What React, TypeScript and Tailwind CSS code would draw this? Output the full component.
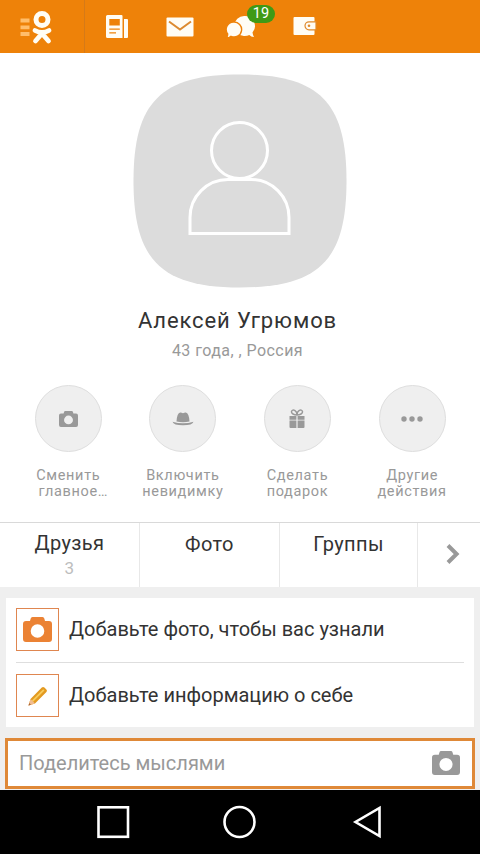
import { useState } from 'react';
import type { ReactNode } from 'react';

const actions = [
  { lines: ['Сменить', 'главное…'], icon: <CameraIcon className="h-[16px] w-[19px] text-[#999]" />, shift: true },
  { lines: ['Включить', 'невидимку'], icon: <HatIcon /> },
  { lines: ['Сделать', 'подарок'], icon: <GiftIcon /> },
  { lines: ['Другие', 'действия'], icon: <DotsIcon /> },
];

export default function App() {
  return (
    <div className="flex h-[854px] w-[480px] flex-col overflow-hidden bg-[#efefef] font-[Roboto,sans-serif]">
      <TopBar />
      <Profile />
      <Tabs />
      <Suggestions />
      <ShareBox />
      <NavBar />
    </div>
  );
}

function TopBar() {
  return (
    <header className="flex h-[53px] shrink-0 bg-[#ee8209]">
      <div className="flex w-[85px] border-r border-[#d57a18]">
        <Logo />
      </div>
      <div className="flex items-center pl-[21px]">
        <NewsIcon />
        <MailIcon />
        <div className="relative ml-[31px]">
          <ChatIcon />
          <span className="absolute -top-[10px] left-[22px] h-[18px] w-[28px] rounded-full bg-[#3f9a16] text-center text-[14.5px] leading-[18px] text-white">19</span>
        </div>
        <WalletIcon />
      </div>
    </header>
  );
}

function Profile() {
  return (
    <section className="flex h-[469px] shrink-0 flex-col items-center bg-white pt-[21px]">
      <Avatar />
      <h1 className="mt-[19px] pr-[5px] text-[22px] leading-[28px] tracking-[0.9px] text-[#333]">Алексей Угрюмов</h1>
      <p className="mt-[7px] pr-[5px] text-[16px] leading-[18px] tracking-[0.45px] text-[#999]">43 года, , Россия</p>
      <div className="mt-[25px] flex w-full pl-[11px]">
        {actions.map((a) => (
          <div key={a.lines[0]} className="flex w-[114.6px] shrink-0 flex-col items-center">
            <div className="flex h-[67px] w-[67px] items-center justify-center rounded-full border border-[#dedede] bg-[#efefef]">
              {a.icon}
            </div>
            <div className="mt-[16px] text-center text-[14.5px] leading-[16px] tracking-[0.65px] whitespace-nowrap text-[#999]">
              <div>{a.lines[0]}</div>
              <div className={a.shift ? 'pl-[10px]' : ''}>{a.lines[1]}</div>
            </div>
          </div>
        ))}
      </div>
    </section>
  );
}

function Tabs() {
  return (
    <nav className="flex h-[65px] shrink-0 border-t border-[#d9d9d9] bg-white text-center text-[20px] leading-[24px] tracking-[0.4px] text-[#333]">
      <div className="w-[140px] border-r border-[#e8e8e8] pt-[8px]">
        <div>Друзья</div>
        <div className="mt-px text-[17px] text-[#bdbdbd]">3</div>
      </div>
      <div className="w-[140px] border-r border-[#e8e8e8] pt-[9px]">Фото</div>
      <div className="w-[138px] border-r border-[#e8e8e8] pt-[9px]">Группы</div>
      <div className="flex flex-1 items-center justify-center pb-[2px] pl-[8px]">
        <svg width="14" height="22" viewBox="0 0 14 22" fill="none" stroke="#999" strokeWidth="4">
          <path d="M2 2.500 10.600 11 2 19.500" />
        </svg>
      </div>
    </nav>
  );
}

function Suggestions() {
  return (
    <section className="mx-[6px] mt-[11px] h-[129px] shrink-0 bg-white px-[10px] pt-[10px]">
      <SuggestionRow text="Добавьте фото, чтобы вас узнали">
        <CameraIcon className="h-[25px] w-[29px] text-[#eb8234]" />
      </SuggestionRow>
      <div className="mt-[11px] mb-[11px] h-px bg-[#dedede]" />
      <SuggestionRow text="Добавьте информацию о себе">
        <PencilIcon />
      </SuggestionRow>
    </section>
  );
}

function SuggestionRow({ text, children }: { text: string; children: ReactNode }) {
  return (
    <div className="flex h-[43px] items-center">
      <div className="flex h-[43px] w-[43px] items-center justify-center border border-[#df8650]">{children}</div>
      <span className="ml-[10px] pb-px text-[20px] leading-[24px] whitespace-nowrap text-[#333]">{text}</span>
    </div>
  );
}

function ShareBox() {
  const [text, setText] = useState<string>('');
  return (
    <div className="mx-[5px] mt-[11px] flex h-[51px] shrink-0 items-center border-[3px] border-[#df8938] bg-white pr-[12px] pb-px pl-[11px]">
      <input
        value={text}
        onChange={(e) => setText(e.target.value)}
        placeholder="Поделитесь мыслями"
        className="min-w-0 flex-1 text-[20px] outline-none placeholder:text-[#999]"
      />
      <CameraIcon className="h-[24px] w-[28px] text-[#999]" />
    </div>
  );
}

function NavBar() {
  return (
    <footer className="mt-px flex flex-1 items-center justify-center bg-black">
      <svg width="286" height="36" viewBox="0 0 286 36" fill="none" stroke="#fff" strokeWidth="2.600">
        <rect x="1.500" y="3.300" width="29.500" height="29.500" />
        <circle cx="142.500" cy="18" r="15" />
        <path d="M282.500 4v28L258.500 18z" />
      </svg>
    </footer>
  );
}

/* ------------ icons ------------ */

function Logo() {
  return (
    <svg width="84" height="53" viewBox="0 0 84 53" fill="none" stroke="#fffdf5" strokeLinecap="round">
      <g stroke="#ffbd6b" strokeWidth="3.800" strokeLinecap="butt">
        <path d="M20.500 20.500h9M20.500 27.300h9M20.500 34h9" />
      </g>
      <circle cx="42" cy="19.500" r="6" strokeWidth="5" />
      <path d="M35 30.500Q42 34.500 49 30.500M42 33.500 35.500 41M42 33.500 48.500 41" strokeWidth="4.800" />
    </svg>
  );
}

function NewsIcon() {
  return (
    <svg width="23" height="24" viewBox="0 0 23 24" fill="#fffdf5">
      <path fillRule="evenodd" d="M1.500 0h14q1 0 1 1v22h-15q-1.500 0-1.500-1.500v-20q0-1.500 1.500-1.500zM3.300 4v6.500h10.500v-6.500zM3.300 13.500v1.200h10.500v-1.200zM3.300 17.200v1.200h6.700v-1.200z" />
      <path d="M18 4h3q1 0 1 1v17q0 1-1 1h-3z" />
    </svg>
  );
}

function MailIcon() {
  return (
    <svg className="ml-[37px]" width="28" height="20" viewBox="0 0 28 20">
      <rect x="0.500" y="0.500" width="27" height="19" rx="1" fill="#fffdf5" />
      <path d="M3 4.500 14 12.500 25 4.500" fill="none" stroke="#dc8a30" strokeWidth="2" />
    </svg>
  );
}

function ChatIcon() {
  return (
    <svg width="31" height="24" viewBox="0 0 31 24" fill="#fffdf5">
      <path d="M19.500 1a10 10 0 0 1 8 16.500q.3 2.500 1.500 4.500-3-.2-4.700-2-2.400 1.200-5.500 1A10 10 0 0 1 19.500 1z" />
      <path d="M8.500 7a7.500 7.500 0 1 1-2.500 14.300q-2 1.700-4.500 1.700 1.200-1.700 1.200-4A7.500 7.500 0 0 1 8.500 7z" stroke="#ee8209" strokeWidth="1.400" />
    </svg>
  );
}

function WalletIcon() {
  return (
    <svg className="mb-[2px] ml-[36.500px]" width="24" height="20" viewBox="0 0 24 20">
      <path d="M1.500 1h19q1 0 1 1v16q0 1-1 1h-19q-1 0-1-1V2q0-1 1-1z" fill="#fffdf5" />
      <path d="M23 5.800h-7a4 4 0 0 0 0 8h7z" fill="#fffdf5" stroke="#e08a2a" strokeWidth="1.200" />
      <circle cx="16" cy="9.800" r="1.300" fill="#e08a2a" />
    </svg>
  );
}

function Avatar() {
  return (
    <svg className="shrink-0" width="214" height="214" viewBox="0 0 214 214">
      <path d="M107 .5C186 .5 213.500 28 213.500 107S186 213.500 107 213.500.5 186 .5 107 28 .5 107 .5z" fill="#dcdcdc" />
      <g fill="none" stroke="#fff" strokeWidth="3">
        <circle cx="106.500" cy="76.500" r="28" />
        <path d="M57 159.500v-16a38 38 0 0 1 38-38h23a38 38 0 0 1 38 38v16z" />
      </g>
    </svg>
  );
}

function CameraIcon({ className }: { className: string }) {
  return (
    <svg className={className} viewBox="0 0 29 25" preserveAspectRatio="none" fill="currentColor">
      <path fillRule="evenodd" d="M9.500 0h10q1.500 0 1.800 1.500l.7 2.500h4q3 0 3 3v15q0 3-3 3h-23q-3 0-3-3V7q0-3 3-3h4l.7-2.500Q8 0 9.500 0zM14.500 7.200a6.800 6.800 0 1 0 0 13.600 6.800 6.800 0 0 0 0-13.600z" />
    </svg>
  );
}

function HatIcon() {
  return (
    <svg width="22" height="14" viewBox="0 0 22 14" fill="#999">
      <path d="M4.500 9.500Q5 1 8.200.5 9.500.4 11 1.200 12.500.4 13.800.5 17 1 17.500 9.500q-6.500 1.500-13 0z" />
      <path d="M.5 9.700Q11 13 21.500 9.700 20.500 13.300 11 13.300T.5 9.700z" />
    </svg>
  );
}

function GiftIcon() {
  return (
    <svg width="16" height="20" viewBox="0 0 16 20" fill="#999">
      <path d="M.5 7h6.900v3.800H.5zM8.600 7h6.900v3.800H8.600zM.5 11.500h6.900V19H1.500q-1 0-1-1zM8.600 11.500h6.900V18q0 1-1 1H8.600z" />
      <path d="M8 6C5 6 2 4.500 2.500 2.500 3.500-.5 8 1.500 8 6zM8 6c3 0 6-1.500 5.500-3.500C12.500-.5 8 1.500 8 6z" fill="none" stroke="#999" strokeWidth="1.500" />
    </svg>
  );
}

function DotsIcon() {
  return (
    <svg width="22" height="6" viewBox="0 0 22 6" fill="#999">
      <circle cx="3" cy="3" r="2.700" />
      <circle cx="11" cy="3" r="2.700" />
      <circle cx="19" cy="3" r="2.700" />
    </svg>
  );
}

function PencilIcon() {
  return (
    <svg width="22" height="22" viewBox="0 0 22 22">
      <path d="M1.500 20.500 3.500 14 14.800 2.600q1.300-1.200 2.600 0l2 2q1.200 1.200 0 2.500L8 18.400z" fill="#e39a20" />
      <path d="M5.500 16.200 16.800 4.900" stroke="#f8cc5c" strokeWidth="1.800" />
      <path d="M1.500 20.500 3.500 14 8 18.400z" fill="#f1bd91" />
      <path d="M1.500 20.500l.8-2.500 1.700 1.700z" fill="#a8653a" />
    </svg>
  );
}
